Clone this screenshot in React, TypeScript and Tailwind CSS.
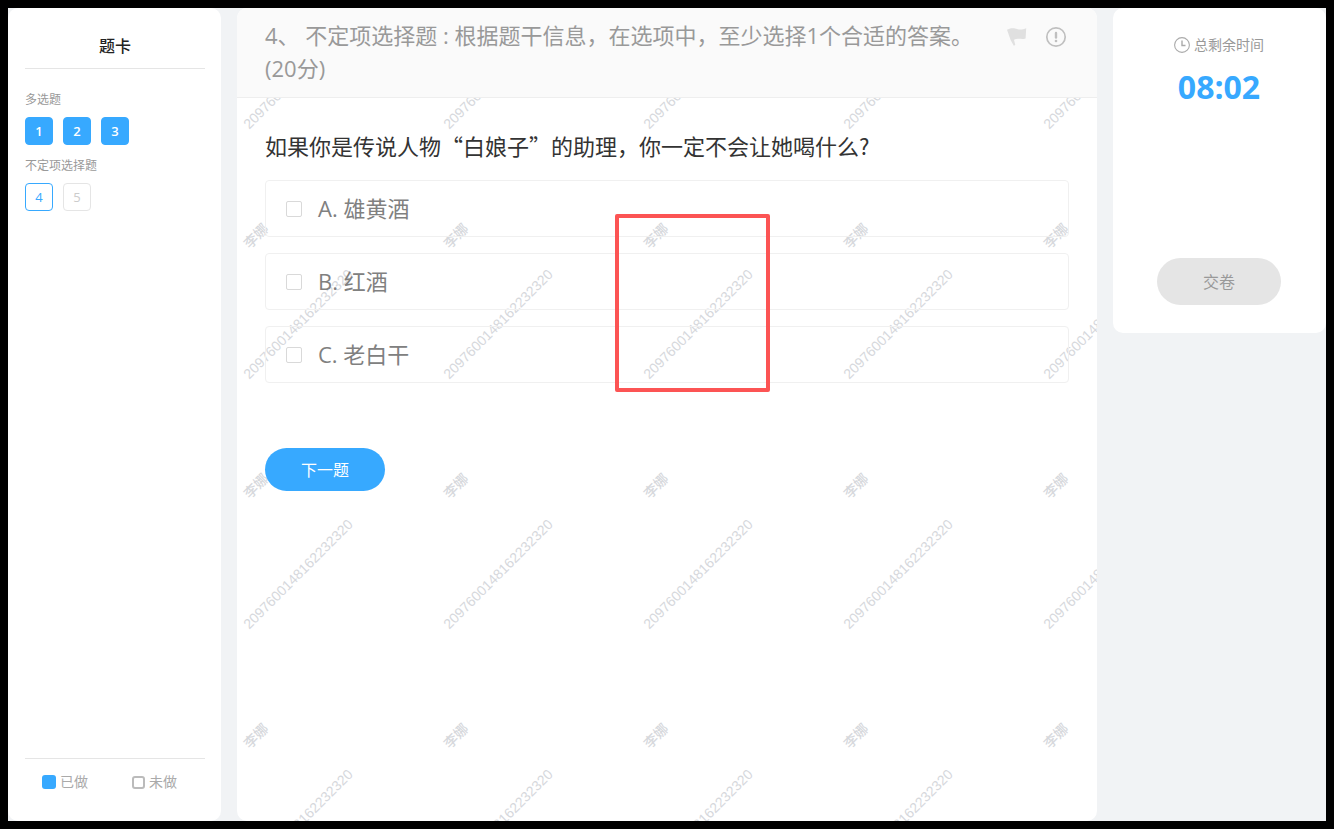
import React from 'react';
import { clsx } from 'clsx';

type CardState = 'done' | 'current' | 'todo';

const groups: { title: string; items: { no: number; state: CardState }[] }[] = [
  {
    title: '多选题',
    items: [
      { no: 1, state: 'done' },
      { no: 2, state: 'done' },
      { no: 3, state: 'done' },
    ],
  },
  {
    title: '不定项选择题',
    items: [
      { no: 4, state: 'current' },
      { no: 5, state: 'todo' },
    ],
  },
];

const options = [
  { key: 'A', text: '雄黄酒' },
  { key: 'B', text: '红酒' },
  { key: 'C', text: '老白干' },
];

const COLS = 5;
const ROWS = 4;

const AnswerCard = () => (
  <aside className="w-[213px] shrink-0 bg-white rounded-[10px] pl-[17px] pr-4 flex flex-col">
    <h2 className="pt-6 pb-2 h-[61px] border-b border-[#e5e5e5] text-center text-base leading-7 font-medium text-[#222]">
      题卡
    </h2>

    <div className="flex-1 pt-[21px]">
      {groups.map((group) => (
        <section key={group.title} className="mb-[11px]">
          <h3 className="text-xs leading-5 text-[#999]">{group.title}</h3>
          <div className="flex gap-[10px] pt-[7px]">
            {group.items.map((item) => (
              <button
                key={item.no}
                className={clsx(
                  'size-7 rounded border text-[13px] leading-none',
                  item.state === 'done' && 'bg-[#37a9ff] border-[#37a9ff] text-white font-semibold',
                  item.state === 'current' && 'bg-white border-[#37a9ff] text-[#37a9ff]',
                  item.state === 'todo' && 'bg-white border-[#e5e5e5] text-[#ccc]'
                )}
              >
                {item.no}
              </button>
            ))}
          </div>
        </section>
      ))}
    </div>

    <div className="h-[63px] border-t border-[#e5e5e5] pt-[11px] pl-[17px] flex gap-11 text-sm leading-6 text-[#aaa]">
      <span className="flex items-center gap-1 h-6">
        <i className="size-[14px] rounded-[3px] bg-[#37a9ff]" />
        已做
      </span>
      <span className="flex items-center gap-1 h-6">
        <i className="size-[13px] rounded-[3px] border-2 border-[#bbb]" />
        未做
      </span>
    </div>
  </aside>
);

// Repeated diagonal watermark with the name and id of the examinee
const Watermark = () => (
  <div aria-hidden="true" className="absolute inset-0 overflow-hidden pointer-events-none select-none">
    <div
      className="grid grid-cols-[repeat(5,200px)] auto-rows-[250px] text-sm leading-4 font-medium text-[#d6d8dc] font-['Liberation_Sans','Noto_Sans_CJK_SC',sans-serif]"
    >
      {Array.from({ length: COLS * ROWS }, (_, i) => (
        <div key={i} className="relative">
          <span className="absolute left-[61px] top-[66px] -translate-1/2 -rotate-45 whitespace-nowrap">
            2097600148162232320
          </span>
          {i < COLS * (ROWS - 1) && (
            <span className="absolute left-[19px] top-[228px] -translate-1/2 -rotate-45 whitespace-nowrap">李娜</span>
          )}
        </div>
      ))}
    </div>
  </div>
);

const QuestionPanel = () => (
  <main className="relative flex-1 min-w-0 bg-white rounded-[10px] overflow-hidden">
    <Watermark />

    <header className="relative bg-[#fafafa] border-b border-[#eee] pt-[11px] pb-3 pl-7 pr-[30px] flex gap-5">
      <h1 className="flex-1 text-[22px] leading-[33px] text-[#999]">
        4、 不定项选择题 : 根据题干信息，在选项中，至少选择1个合适的答案。 (20分)
      </h1>
      <div className="flex gap-[18px] pt-[7px]">
        <button aria-label="标记" className="size-[22px]">
          <svg viewBox="0 0 22 22" className="size-[22px]" fill="#e0e0e0">
            <path d="M2 3.800C4 2.400 6.500 2 9 2.300c2.200.3 3.500 1.300 6 1.300 2.300 0 4.300-.6 6.200-1.400L20.600 12.600c-1.600.6-3 .2-5 .1-2.600-.1-4.500.2-6.600 1.100l1.300 5.200-1.500.7L5.600 14z" />
          </svg>
        </button>
        <button aria-label="反馈" className="size-[22px]">
          <svg viewBox="0 0 22 22" className="size-[22px]" fill="none">
            <circle cx="11" cy="11" r="9.200" stroke="#c0c0c0" strokeWidth="1.700" />
            <path d="M11 7v4.500" stroke="#c0c0c0" strokeWidth="2.400" strokeLinecap="round" />
            <circle cx="11" cy="15" r="1.300" fill="#c0c0c0" />
          </svg>
        </button>
      </div>
    </header>

    <form className="relative px-7 pt-[31px]" onSubmit={(e) => e.preventDefault()}>
      <fieldset>
        <legend className="text-[22px] leading-[33px] text-[#333] font-['Noto_Sans_CJK_SC',sans-serif]">
          如果你是传说人物“白娘子”的助理，你一定不会让她喝什么?
        </legend>
        <div className="mt-[18px] space-y-4">
          {options.map((option) => (
            <label
              key={option.key}
              className="flex items-center gap-4 px-5 py-[11px] border border-[#f0f0f0] rounded text-[22px] leading-[33px] text-[#808080]"
            >
              <input
                type="checkbox"
                name="answer"
                value={option.key}
                className="appearance-none size-4 border border-[#d9d9d9] rounded-[2px] bg-white checked:bg-[#37a9ff]"
              />
              {option.key}. {option.text}
            </label>
          ))}
        </div>
      </fieldset>
      <button className="mt-[65px] w-[120px] h-[43px] rounded-full bg-[#37a9ff] text-base text-white">下一题</button>
    </form>

    {/* Highlighted area */}
    <div className="absolute left-[378px] top-[206px] w-[155px] h-[178px] border-4 border-[#fc5454] rounded-[2px] pointer-events-none" />
  </main>
);

const TimerPanel = () => (
  <aside className="w-[213px] h-[325px] shrink-0 bg-white rounded-[10px] pt-[25px] pb-7 pr-px flex flex-col items-center">
    <div className="flex items-center gap-1 text-sm leading-6 text-[#999]">
      <svg viewBox="0 0 16 16" className="size-4" fill="none" stroke="#aaa">
        <circle cx="8" cy="8" r="7.400" strokeWidth="1.100" />
        <path d="M8 3.500v5h3.500" strokeWidth="1.400" />
      </svg>
      总剩余时间
    </div>
    <time className="mt-2 text-[32px] leading-[44px] font-bold text-[#37a9ff]">08:02</time>
    <button className="mt-auto w-[124px] h-[47px] rounded-full bg-[#e5e5e5] text-base text-[#999]">交卷</button>
  </aside>
);

export default function App() {
  return (
    <div className="min-h-screen bg-[#f1f3f5] border-8 border-black flex gap-4 font-['Open_Sans','Noto_Sans_CJK_SC',sans-serif]">
      <AnswerCard />
      <QuestionPanel />
      <TimerPanel />
    </div>
  );
}
